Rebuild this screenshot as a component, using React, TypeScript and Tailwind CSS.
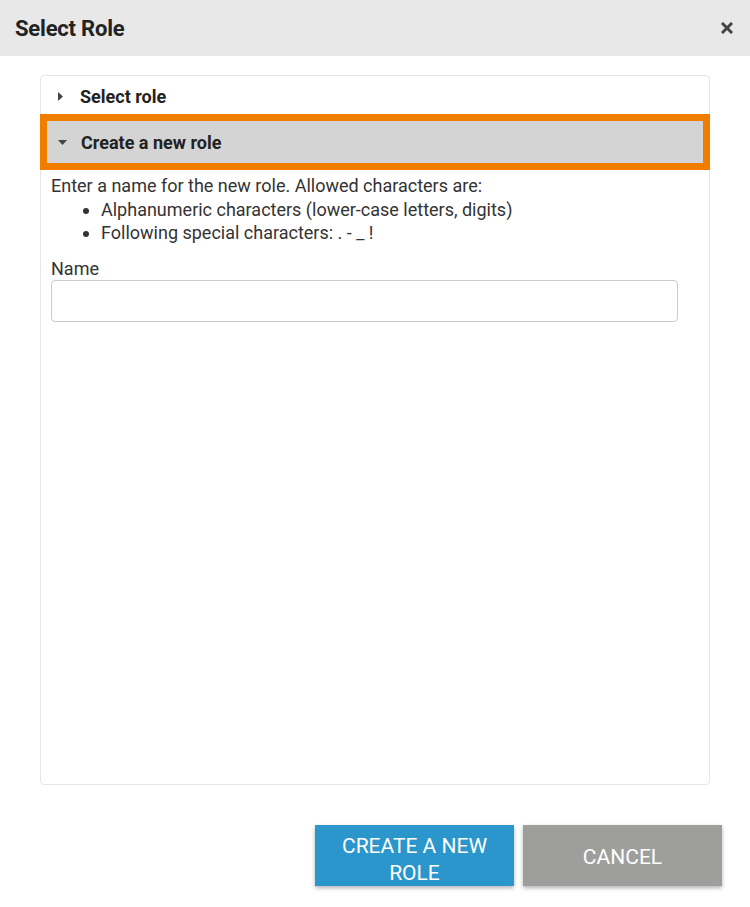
export default function App() {
  return (
    <div className="w-[750px] h-[907px] bg-white flex flex-col font-['Roboto',sans-serif] text-[#222]">
      {/* Header */}
      <div className="h-[56px] bg-[#e8e8e8] flex items-center justify-between pl-[15px] pr-[17px] shrink-0">
        <h1 className="text-[22px] font-bold text-[#222] tracking-[-0.2px]">Select Role</h1>
        <svg width="12" height="12" viewBox="0 0 12 12">
          <path d="M2 2 L10 10 M10 2 L2 10" stroke="#444" strokeWidth="3" strokeLinecap="square" />
        </svg>
      </div>

      {/* Panel */}
      <div className="mt-[19px] ml-[40px] w-[670px] h-[710px] border border-[#e6e6e6] rounded-[4px] flex flex-col">
        <div className="h-[38px] pt-[2px] flex items-center pl-[17px] gap-[17px] shrink-0">
          <svg width="5" height="9" viewBox="0 0 5 9">
            <path d="M0 0 L5 4.5 L0 9 Z" fill="#444" />
          </svg>
          <span className="text-[18px] font-bold text-[#222]">Select role</span>
        </div>
        <div className="-mx-px h-[56px] border-[7px] border-[#f07c00] bg-[#d4d4d4] flex items-center pl-[11px] gap-[14px] shrink-0">
          <svg width="9" height="5" viewBox="0 0 9 5">
            <path d="M0 0 L9 0 L4.5 5 Z" fill="#444" />
          </svg>
          <span className="text-[18px] font-bold text-[#222]">Create a new role</span>
        </div>

        <div className="pl-[10px] pt-[4px] text-[18px] leading-[23.5px] text-[#333]">
          <p>Enter a name for the new role. Allowed characters are:</p>
          <ul className="list-disc pl-[50px]">
            <li>Alphanumeric characters (lower-case letters, digits)</li>
            <li>Following special characters: . - _ !</li>
          </ul>
          <label className="block mt-[12px]">Name</label>
          <input
            type="text"
            className="mt-0 w-[627px] h-[42px] border border-[#cccccc] rounded-[4px] outline-none px-2"
          />
        </div>
      </div>

      {/* Footer buttons */}
      <div className="flex justify-end gap-[9px] pr-[28px] mt-[40px]">
        <button className="w-[199px] h-[61px] pt-[8px] bg-[#2b96cc] text-white text-[21px] leading-[27px] uppercase shadow-[0_2px_4px_rgba(0,0,0,0.3)]">
          Create a new
          <br />
          role
        </button>
        <button className="w-[199px] h-[61px] pt-[5px] bg-[#9e9e9d] text-white text-[21px] uppercase shadow-[0_2px_4px_rgba(0,0,0,0.3)]">
          Cancel
        </button>
      </div>
    </div>
  );
}
